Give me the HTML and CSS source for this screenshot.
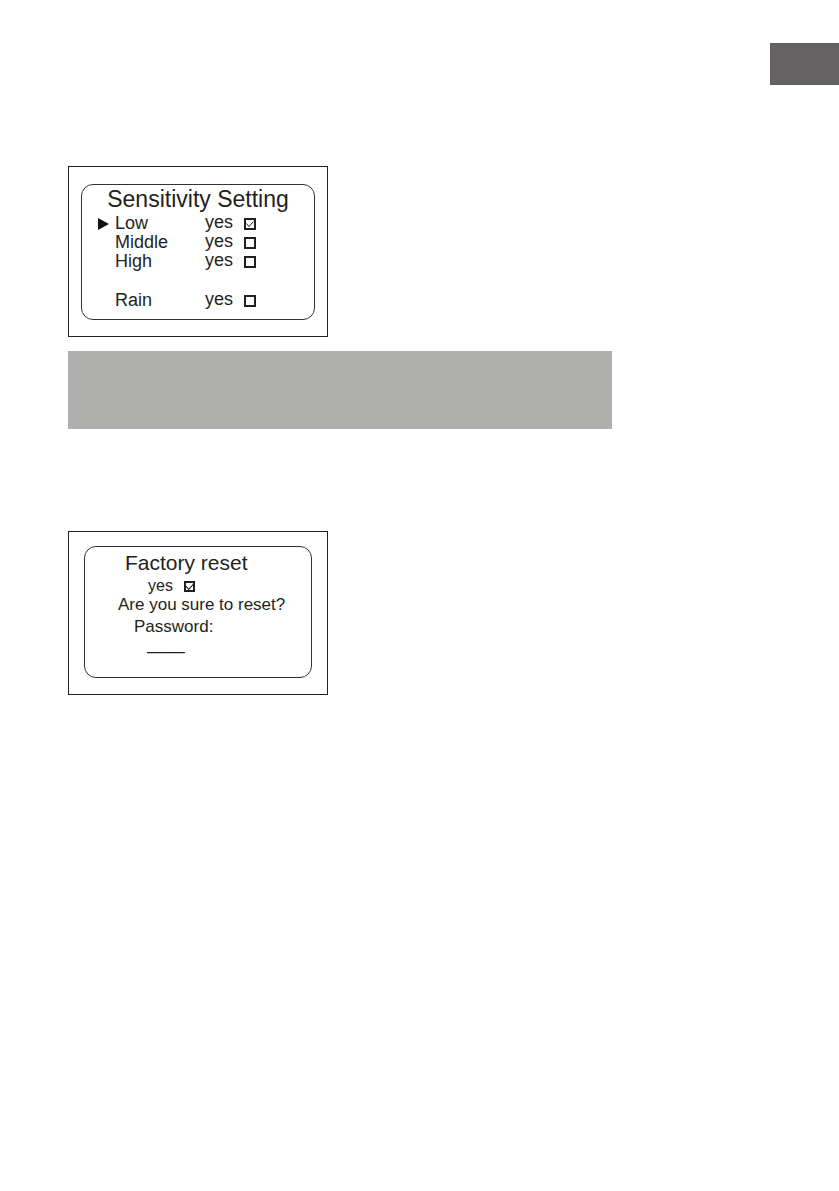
FILE: index.html
```
<!DOCTYPE html>
<html lang="en">
<head>
    <meta charset="UTF-8">
    <meta name="viewport" content="width=device-width, initial-scale=1.0">
    <title>Sensitivity Setting and Factory reset</title>
    <link rel="stylesheet" href="styles.css">
</head>
<body>
    <header class="page-header">
        <div class="page-tab"></div>
    </header>
    <main>
        <section class="frame">
            <form class="screen sensitivity">
                <h1>Sensitivity Setting</h1>
                <div class="option">
                    <svg class="pointer" viewBox="0 0 11 14" aria-hidden="true"><path d="M0 1L11 7L0 13Z"/></svg>
                    <span class="name" id="low">Low</span>
                    <label for="low-yes">yes</label>
                    <input type="checkbox" id="low-yes" aria-describedby="low" checked>
                </div>
                <div class="option">
                    <span class="name" id="middle">Middle</span>
                    <label for="middle-yes">yes</label>
                    <input type="checkbox" id="middle-yes" aria-describedby="middle">
                </div>
                <div class="option">
                    <span class="name" id="high">High</span>
                    <label for="high-yes">yes</label>
                    <input type="checkbox" id="high-yes" aria-describedby="high">
                </div>
                <div class="option rain">
                    <span class="name" id="rain">Rain</span>
                    <label for="rain-yes">yes</label>
                    <input type="checkbox" id="rain-yes" aria-describedby="rain">
                </div>
            </form>
        </section>

        <div class="note"></div>

        <section class="frame">
            <form class="screen reset">
                <h2>Factory reset</h2>
                <div class="confirm">
                    <label for="reset-yes">yes</label>
                    <input type="checkbox" id="reset-yes" checked>
                </div>
                <p>Are you sure to reset?</p>
                <label class="password-label" for="password">Password:</label>
                <input class="password" type="text" id="password" maxlength="4" value="____">
            </form>
        </section>
    </main>
</body>
</html>
```
FILE: styles.css
```
* {
    box-sizing: border-box;
}
body {
    margin: 0;
    background-color: #fff;
    color: #231f20;
    font-family: "Liberation Sans", Arial, sans-serif;
    font-size: 16px;
}
h1, h2, p {
    margin: 0;
    font-weight: normal;
}
.page-header {
    display: flex;
    justify-content: flex-end;
    padding-top: 43px;
    margin-bottom: 81px;
}
.page-tab {
    width: 69px;
    height: 42px;
    background-color: #656263;
}
main {
    padding: 0 68px;
}
.frame {
    width: 100%;
    max-width: 260px;
    border: 1px solid #231f20;
}
.screen {
    border: 1px solid #333;
    border-radius: 12px;
}

/* Sensitivity screen */
.sensitivity {
    margin: 17px 12px 16px;
    padding-bottom: 9px;
}
.sensitivity h1 {
    font-size: 23px;
    line-height: 29px;
    text-align: center;
}
.option {
    display: grid;
    grid-template-columns: 17px 90px 39px 12px;
    align-items: center;
    height: 19px;
    padding-left: 16px;
}
.option .name {
    grid-column: 2;
    font-size: 18px;
    line-height: 19px;
}
.option label {
    font-size: 18px;
    line-height: 17px;
    padding-bottom: 2px;
}
.rain {
    margin-top: 20px;
}
.pointer {
    width: 11px;
    height: 14px;
    fill: #111;
}

input[type="checkbox"] {
    appearance: none;
    width: 12px;
    height: 12px;
    margin: 0;
    border: 2px solid #231f20;
}
input[type="checkbox"]:checked {
    background: url("data:image/svg+xml,%3Csvg xmlns='http://www.w3.org/2000/svg' viewBox='0 0 8 8'%3E%3Cpath d='M0.5 3.5L3 6.5L7.5 1.5' fill='none' stroke='%23231f20'/%3E%3C/svg%3E") center / 8px 8px no-repeat;
}

.note {
    width: 100%;
    max-width: 544px;
    height: 78px;
    margin: 14px 0 102px;
    background-color: #afafad;
}

/* Factory reset screen */
.reset {
    display: flex;
    flex-direction: column;
    align-items: flex-start;
    margin: 14px 15px 16px;
    padding: 1px 0 23px 33px;
}
.reset h2 {
    font-size: 21px;
    line-height: 29px;
    padding-left: 7px;
}
.confirm {
    display: flex;
    align-items: center;
    gap: 11px;
    height: 18px;
    padding-left: 30px;
}
.confirm label {
    line-height: 16px;
    padding-bottom: 1px;
}
.confirm input[type="checkbox"] {
    width: 11px;
    height: 11px;
}
.reset p {
    font-size: 17px;
    line-height: 20px;
}
.password-label {
    font-size: 17px;
    line-height: 18px;
    padding: 3px 0 0 16px;
}
.password {
    width: 80px;
    height: 18px;
    margin-left: 29px;
    padding: 0;
    border: 0;
    background: none;
    color: inherit;
    font: 17px "Liberation Sans", Arial, sans-serif;
}
```
